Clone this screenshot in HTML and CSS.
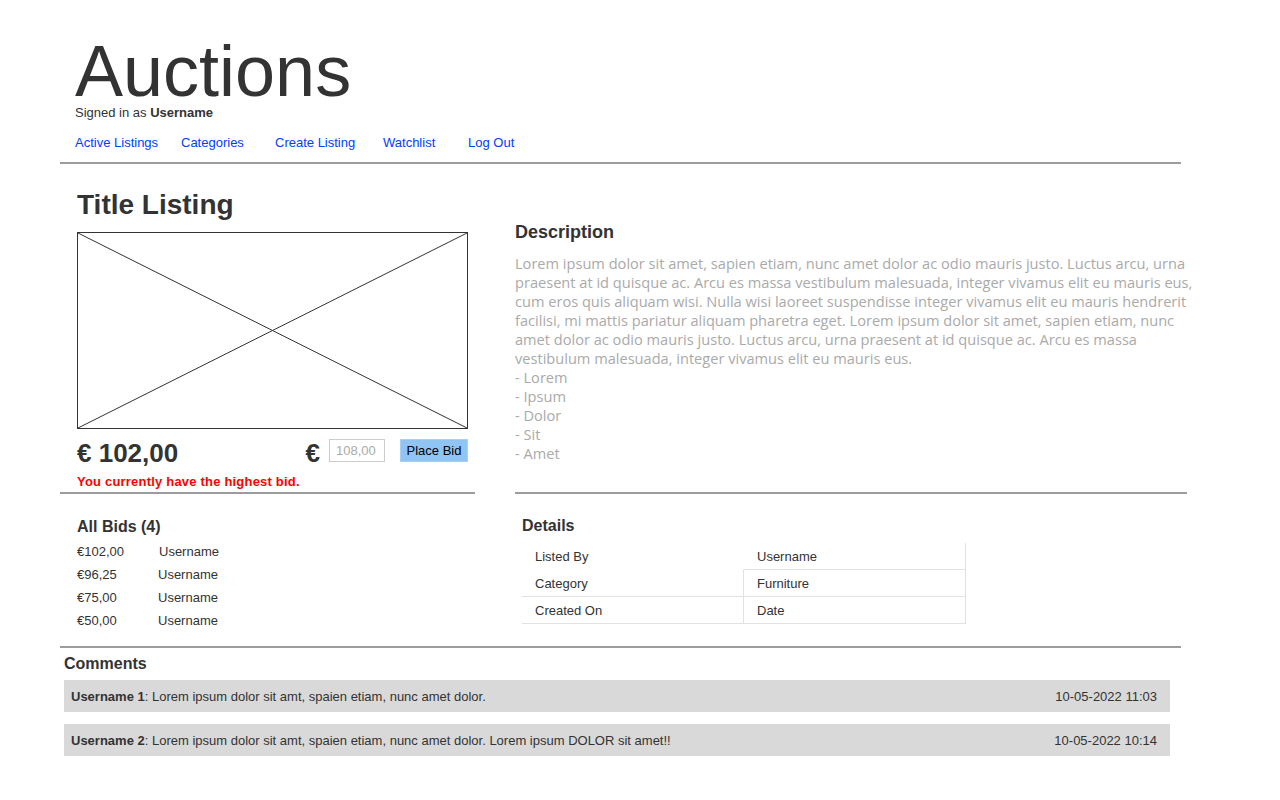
FILE: index.html
```html
<!DOCTYPE html>
<html lang="en">
<head>
  <meta charset="UTF-8" />
  <meta name="viewport" content="width=device-width, initial-scale=1.0"/>
  <title>Auctions - Title Listing</title>
  <link rel="stylesheet" href="styles.css">
</head>
<body>
  <div class="page">
    <header class="site-header">
      <h1>Auctions</h1>
      <div class="signed-in">Signed in as <strong>Username</strong></div>
      <nav class="nav">
        <a href="#">Active Listings</a>
        <a href="#">Categories</a>
        <a href="#">Create Listing</a>
        <a href="#">Watchlist</a>
        <a href="#">Log Out</a>
      </nav>
    </header>

    <hr class="rule">

    <main class="listing">
      <div class="listing-info">
        <h2 class="listing-title">Title Listing</h2>
        <div class="listing-image">
          <svg width="100%" height="100%" viewBox="0 0 389 195" preserveAspectRatio="none">
            <line x1="0" y1="0" x2="389" y2="195" stroke="#333" stroke-width="1"/>
            <line x1="389" y1="0" x2="0" y2="195" stroke="#333" stroke-width="1"/>
          </svg>
        </div>
        <form class="bid-form" id="bidForm">
          <span class="price">€ 102,00</span>
          <span class="currency">€</span>
          <input type="text" id="bidAmount" placeholder="108,00">
          <button type="submit">Place Bid</button>
        </form>
        <p class="bid-note">You currently have the highest bid.</p>
      </div>

      <div class="description">
        <h3>Description</h3>
        <p>Lorem ipsum dolor sit amet, sapien etiam, nunc amet dolor ac odio mauris justo. Luctus arcu, urna praesent at id quisque ac. Arcu es massa vestibulum malesuada, integer vivamus elit eu mauris eus, cum eros quis aliquam wisi. Nulla wisi laoreet suspendisse integer vivamus elit eu mauris hendrerit facilisi, mi mattis pariatur aliquam pharetra eget. Lorem ipsum dolor sit amet, sapien etiam, nunc amet dolor ac odio mauris justo. Luctus arcu, urna praesent at id quisque ac. Arcu es massa vestibulum malesuada, integer vivamus elit eu mauris eus.<br>
        - Lorem<br>
        - Ipsum<br>
        - Dolor<br>
        - Sit<br>
        - Amet</p>
      </div>

      <hr class="rule">
      <hr class="rule rule-right">

      <div class="bids">
        <h3>All Bids (4)</h3>
        <div class="bid-row"><span>€102,00</span><span class="bidder-first">Username</span></div>
        <div class="bid-row"><span>€96,25</span><span>Username</span></div>
        <div class="bid-row"><span>€75,00</span><span>Username</span></div>
        <div class="bid-row"><span>€50,00</span><span>Username</span></div>
      </div>

      <div class="details">
        <h3>Details</h3>
        <table class="details-table">
          <tr><td>Listed By</td><td>Username</td></tr>
          <tr><td>Category</td><td>Furniture</td></tr>
          <tr><td>Created On</td><td>Date</td></tr>
        </table>
      </div>
    </main>

    <hr class="rule">

    <section class="comments">
      <h3>Comments</h3>
      <div class="comment">
        <span><strong>Username 1</strong>: Lorem ipsum dolor sit amt, spaien etiam, nunc amet dolor.</span>
        <span>10-05-2022 11:03</span>
      </div>
      <div class="comment">
        <span><strong>Username 2</strong>: Lorem ipsum dolor sit amt, spaien etiam, nunc amet dolor. Lorem ipsum DOLOR sit amet!!</span>
        <span>10-05-2022 10:14</span>
      </div>
    </section>
  </div>
</body>
</html>
```

FILE: styles.css
```css
body {
  margin: 0;
  font-family: "Liberation Sans", Arial, sans-serif;
  color: #333;
  background: white;
}

.page {
  width: 1121px;
  padding-left: 60px;
}

.rule {
  border: 0;
  border-top: 2px solid #9c9c9c;
  margin: 0;
  height: 0;
}

/* header */
.site-header {
  padding: 38px 0 11px 15px;
}

.site-header h1 {
  margin: 0;
  font-size: 72px;
  line-height: 67px;
  font-weight: normal;
}

.signed-in {
  font-size: 13px;
  line-height: 16px;
}

.nav {
  display: grid;
  grid-template-columns: 106px 94px 108px 85px auto;
  margin-top: 14px;
  font-size: 13px;
  line-height: 16px;
}

.nav a {
  color: #0040ff;
  text-decoration: none;
}

/* listing */
.listing {
  display: grid;
  grid-template-columns: 415px 685px;
  column-gap: 40px;
}

.listing-info {
  padding: 25px 0 2px 17px;
}

.listing-title {
  margin: 0;
  font-size: 28px;
  line-height: 32px;
}

.listing-image {
  box-sizing: border-box;
  width: 391px;
  height: 197px;
  margin-top: 11px;
  border: 1px solid #333;
}

.listing-image svg {
  display: block;
}

.bid-form {
  display: flex;
  align-items: flex-start;
  width: 391px;
  margin-top: 9px;
}

.price {
  flex: 1;
  font-size: 26px;
  line-height: 30px;
  font-weight: bold;
}

.currency {
  font-size: 26px;
  line-height: 30px;
  font-weight: bold;
  margin-right: 9px;
}

.bid-form input {
  box-sizing: border-box;
  width: 56px;
  height: 23px;
  margin: 1px 0 0;
  padding: 0 6px;
  border: 1px solid #ccc;
  font-family: "Liberation Sans", Arial, sans-serif;
  font-size: 13px;
}

.bid-form input::placeholder {
  color: #aaa;
}

.bid-form button {
  box-sizing: border-box;
  width: 68px;
  height: 23px;
  margin: 1px 0 0 15px;
  padding: 0;
  background: #90c4f2;
  border: 1px solid #a9d0f2;
  color: black;
  font-family: "Liberation Sans", Arial, sans-serif;
  font-size: 13px;
  cursor: pointer;
}

.bid-note {
  margin: 6px 0 0;
  color: #ff0000;
  font-size: 13px;
  line-height: 16px;
  font-weight: bold;
  letter-spacing: 0.2px;
}

.description {
  padding-top: 57px;
}

.description h3 {
  margin: 0;
  font-size: 18px;
  line-height: 22px;
}

.description p {
  margin: 11px 0 0;
  font-family: "Open Sans", sans-serif;
  font-size: 14.6px;
  line-height: 19px;
  color: #aaa;
}

.rule-right {
  width: 672px;
}

.bids {
  padding: 23px 0 14px 17px;
}

.bids h3,
.details h3,
.comments h3 {
  margin: 0;
  font-size: 16px;
  line-height: 20px;
}

.bids h3 {
  margin-bottom: 3px;
}

.bid-row {
  display: grid;
  grid-template-columns: 81px auto;
  font-size: 13px;
  line-height: 23px;
}

.bidder-first {
  margin-left: 1px;
}

.details {
  padding: 22px 0 0 7px;
}

.details h3 {
  margin-bottom: 7px;
}

.details-table {
  border-spacing: 0;
  font-size: 13px;
}

.details-table td {
  height: 26px;
  padding: 0 12px 0 13px;
  border-bottom: 1px solid #e2e2e2;
  border-right: 1px solid #e2e2e2;
  width: 196px;
}

.details-table td:first-child {
  border-right: 0;
}

.details-table td + td {
  border-left: 1px solid #e2e2e2;
}

.details-table tr:first-child td:first-child {
  border-bottom: 0;
}

.details-table tr:first-child td + td {
  border-left: 1px solid transparent;
}

/* comments */
.comments {
  width: 1106px;
  padding-left: 4px;
}

.comments h3 {
  margin: 6px 0 6px;
}

.comment {
  display: flex;
  justify-content: space-between;
  height: 32px;
  line-height: 33px;
  padding: 0 13px 0 7px;
  margin-bottom: 12px;
  background: #d9d9d9;
  font-size: 13px;
}
```
